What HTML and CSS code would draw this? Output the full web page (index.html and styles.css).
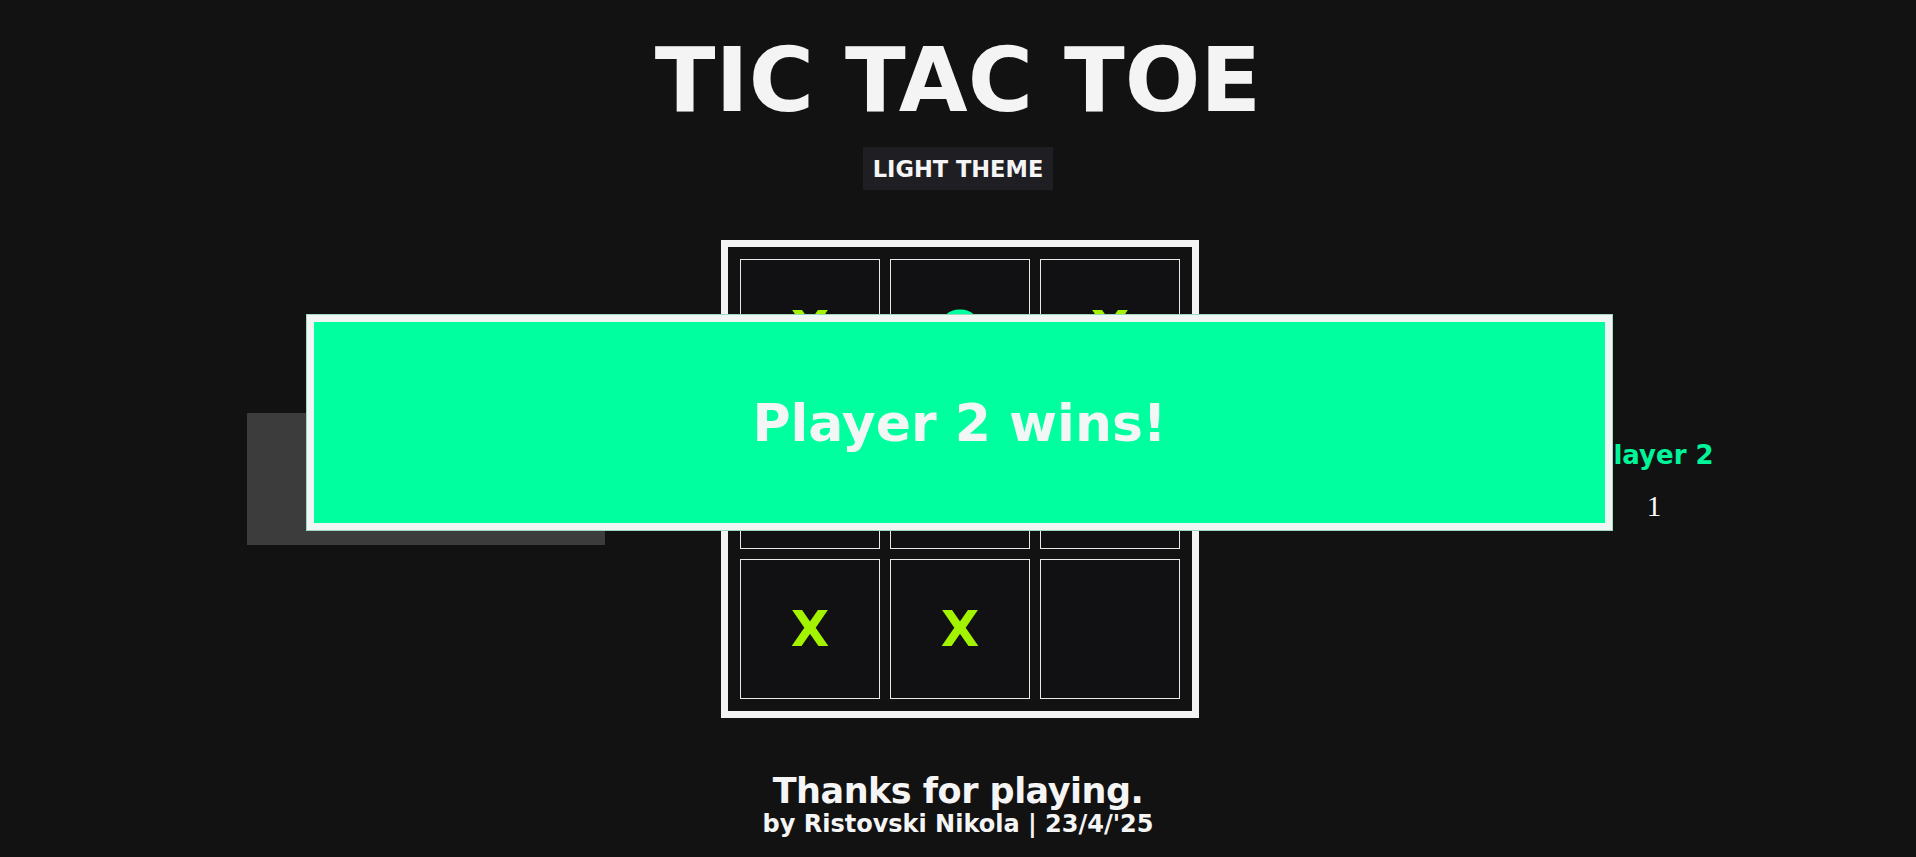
FILE: index.html
```html
<!DOCTYPE html>
<html lang="en">
<head>
<meta charset="utf-8">
<title>Tic Tac Toe</title>
<link rel="stylesheet" href="styles.css">
</head>
<body>
<main class="page">
  <h1 class="title">TIC TAC TOE</h1>
  <button class="theme-btn" type="button">LIGHT THEME</button>
  <section class="game">
    <div class="panel panel-active">
      <h2 class="player player-x">Player 1</h2>
      <div class="score">0</div>
    </div>
    <div class="board">
      <div class="cell mark-x">X</div>
      <div class="cell mark-o">O</div>
      <div class="cell mark-x">X</div>
      <div class="cell mark-o">O</div>
      <div class="cell mark-o">O</div>
      <div class="cell mark-o">O</div>
      <div class="cell mark-x">X</div>
      <div class="cell mark-x">X</div>
      <div class="cell"></div>
    </div>
    <div class="panel panel-right">
      <h2 class="player player-o">Player 2</h2>
      <div class="score">1</div>
    </div>
  </section>
  <footer class="footer">
    <p class="thanks">Thanks for playing.</p>
    <p class="credit">by Ristovski Nikola | 23/4/'25</p>
  </footer>
</main>
<div class="modal">
  <p class="modal-text">Player 2 wins!</p>
</div>
</body>
</html>
```
FILE: styles.css
```css
html, body {
  margin: 0;
  padding: 0;
  background: #121212;
}
body {
  width: 1916px;
  height: 857px;
  overflow: hidden;
  font-family: "DejaVu Sans", Verdana, sans-serif;
  color: #f5f5f5;
}
.page {
  display: flex;
  flex-direction: column;
  align-items: center;
}
.title {
  margin: 28px 0 0;
  font-size: 89px;
  font-weight: bold;
  line-height: normal;
  color: #f4f4f4;
}
.theme-btn {
  margin-top: 15px;
  padding: 8.5px 10px;
  border: none;
  background: #1f1f23;
  color: #f5f5f5;
  font-family: "DejaVu Sans", Verdana, sans-serif;
  font-weight: bold;
  font-size: 22.5px;
  line-height: normal;
}
.game {
  align-self: stretch;
  display: flex;
  align-items: center;
  padding-left: 247px;
  margin-top: 50px;
}
.panel {
  width: 358px;
  box-sizing: border-box;
  padding: 27px 0 22px;
  display: flex;
  flex-direction: column;
  align-items: center;
  gap: 20px;
}
.panel-active {
  background: #3c3c3c;
}
.panel-right {
  padding-left: 6px;
}
.player {
  margin: 0;
  font-size: 26px;
  font-weight: bold;
  line-height: normal;
}
.player-x { color: #a3f200; }
.player-o { color: #00f59b; }
.score {
  font-family: "Liberation Serif", "Times New Roman", serif;
  font-size: 29px;
  line-height: normal;
  color: #ffffff;
}
.board {
  margin: 0 273px 0 116px;
  width: 478px;
  height: 478px;
  box-sizing: border-box;
  border: 7px solid #f3f3f3;
  background: #121212;
  padding: 12px;
  display: grid;
  grid-template-columns: repeat(3, 140px);
  grid-template-rows: repeat(3, 140px);
  gap: 10px;
}
.cell {
  box-sizing: border-box;
  border: 1px solid #e8e8e8;
  background: #111114;
  display: flex;
  align-items: center;
  justify-content: center;
  font-size: 50px;
  font-weight: bold;
}
.mark-x { color: #a3f200; }
.mark-o { color: #00ff9f; }
.footer {
  margin-top: 55px;
  text-align: center;
}
.thanks {
  margin: 0;
  font-size: 35px;
  letter-spacing: -0.5px;
  font-weight: bold;
  line-height: 37px;
  color: #f5f5f5;
}
.credit {
  margin: 0;
  font-size: 24px;
  font-weight: bold;
  line-height: normal;
  color: #f5f5f5;
}
.modal {
  position: fixed;
  top: 314px;
  left: 306px;
  width: 1307px;
  height: 217px;
  box-sizing: border-box;
  border: 8px solid #f0f6f3;
  outline: 1px solid #9fd8bf;
  outline-offset: -1px;
  background: #00ff9f;
  display: flex;
  align-items: center;
  justify-content: center;
}
.modal-text {
  margin: 0;
  font-size: 52px;
  font-weight: bold;
  color: #f2f6f4;
}
```
